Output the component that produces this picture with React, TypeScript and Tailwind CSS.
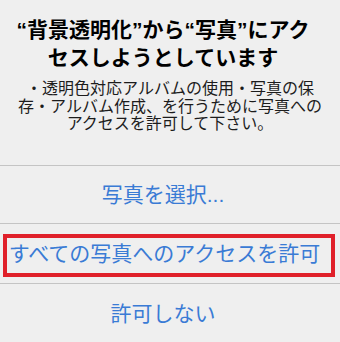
const FONT = "font-['Liberation_Sans','Noto_Sans_CJK_JP',sans-serif]"

export default function App() {
  return (
    <div className={`relative h-[342px] w-[340px] overflow-hidden bg-[#efefef] ${FONT}`}>
      {/* Header */}
      <div className="flex h-[165px] flex-col items-center pt-[16px]">
        <h1 className="pr-[14px] text-center text-[21px] font-bold leading-[28px] text-black">
          “背景透明化”から“写真”にアク
          <br />
          セスしようとしています
        </h1>
        <p className="mt-[8px] text-center text-[16px] leading-[17.5px] text-[#1c1c1c]">
          ・透明色対応アルバムの使用・写真の保
          <br />
          存・アルバム作成、を行うために写真への
          <br />
          アクセスを許可して下さい。
        </p>
      </div>

      <div className="flex h-[58px] items-center justify-center border-t border-[#c4c4c4] pr-[14px] text-[21px] text-[#3a7bd5]">
        写真を選択...
      </div>

      <div className="relative flex h-[60px] items-center justify-center border-t border-[#c4c4c4] pr-[11px] text-[21px] text-[#3a7bd5]">
        すべての写真へのアクセスを許可
        {/* annotation box */}
        <div className="pointer-events-none absolute left-[3px] right-[5px] top-[10px] bottom-[6px] border-[4px] border-[#e0202a]" />
      </div>

      <div className="flex h-[60px] items-center justify-center border-t border-[#c4c4c4] pr-[14px] text-[21px] text-[#3a7bd5]">
        許可しない
      </div>
    </div>
  )
}
